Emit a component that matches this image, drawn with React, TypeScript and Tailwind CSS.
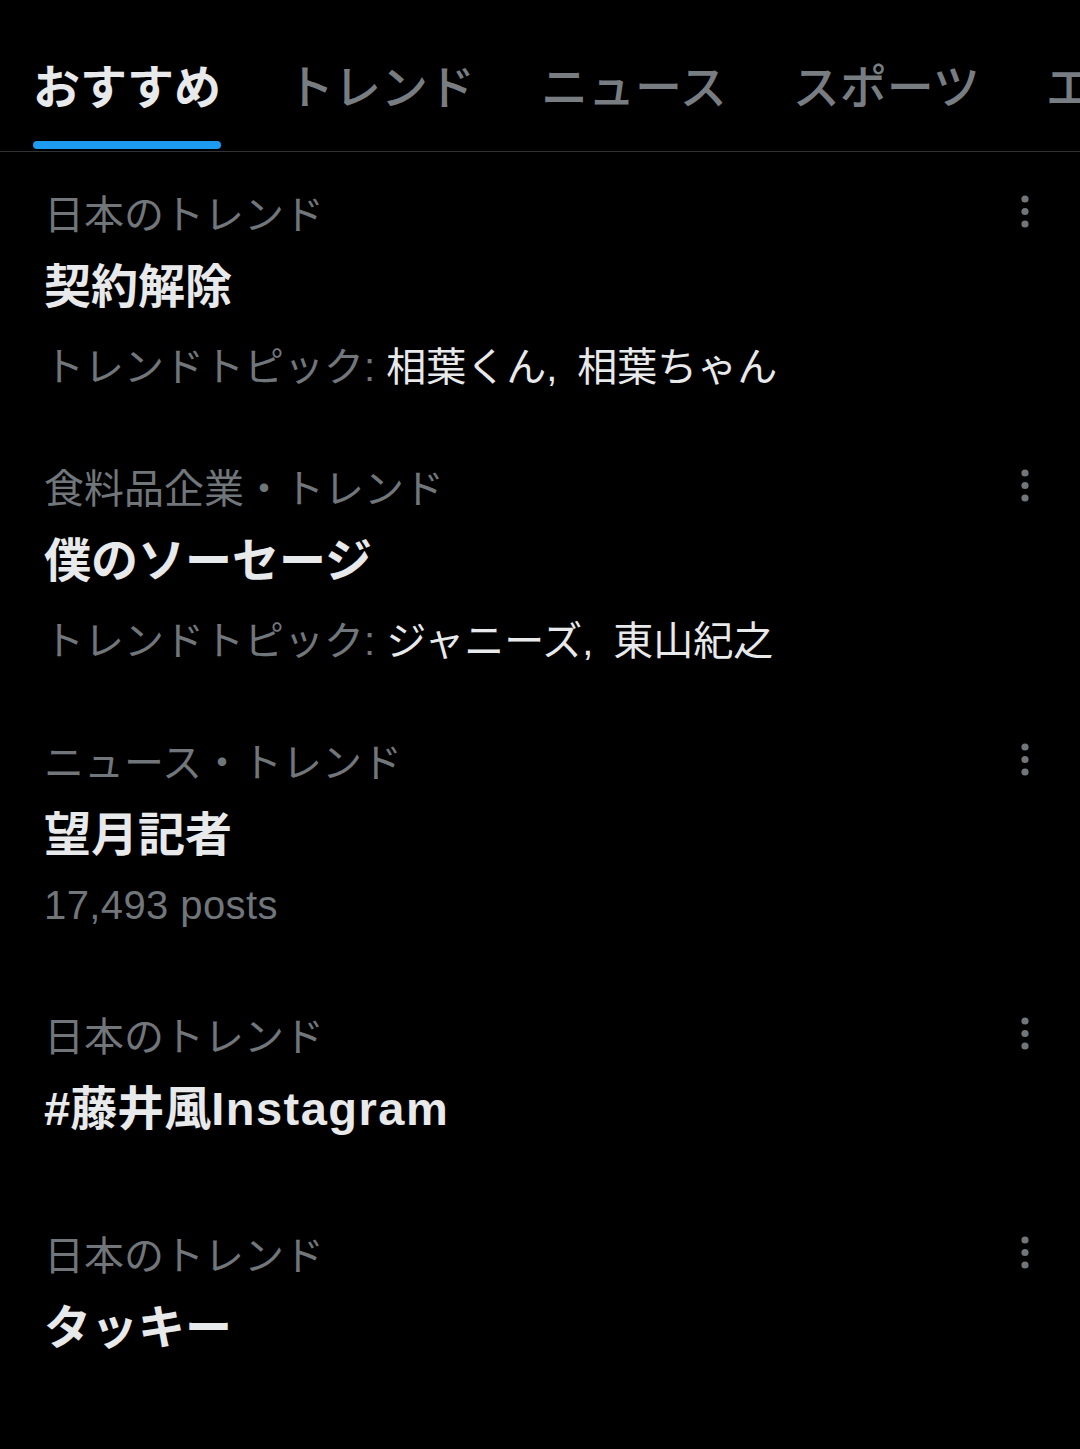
import React from 'react'

// --- Data ---

type Trend = {
  category: string
  title: string
  topics?: string
  posts?: string
}

const tabs = ['おすすめ', 'トレンド', 'ニュース', 'スポーツ', 'エンタメ'] as const

const trends: Trend[] = [
  { category: '日本のトレンド', title: '契約解除', topics: '相葉くん, 相葉ちゃん' },
  { category: '食料品企業・トレンド', title: '僕のソーセージ', topics: 'ジャニーズ, 東山紀之' },
  { category: 'ニュース・トレンド', title: '望月記者', posts: '17,493 posts' },
  { category: '日本のトレンド', title: '#藤井風Instagram' },
  { category: '日本のトレンド', title: 'タッキー' },
]

const FONT = "font-['Liberation_Sans','Noto_Sans_CJK_JP',sans-serif]"

// --- Sub-components ---

// latin runs in the title are a touch wider in the original font
function Title({ text }: { text: string }) {
  const parts = text.split(/([A-Za-z]+)/)
  return (
    <>
      {parts.map((p, i) =>
        /^[A-Za-z]+$/.test(p) ? (
          <span key={i} className="tracking-[1.5px]">
            {p}
          </span>
        ) : (
          <span key={i}>{p}</span>
        ),
      )}
    </>
  )
}

function MoreDots() {
  return (
    <svg width="8" height="33" viewBox="0 0 8 33" className="mt-[8px] mr-[51px] shrink-0" fill="#71767b">
      <circle cx="4" cy="4" r="3.6" />
      <circle cx="4" cy="16.5" r="3.6" />
      <circle cx="4" cy="29" r="3.6" />
    </svg>
  )
}

function TrendRow({ trend }: { trend: Trend }) {
  const hasSub = Boolean(trend.topics || trend.posts)
  return (
    <div className={`flex items-start pt-[35px] ${hasSub ? 'pb-[31px]' : 'pb-[52px]'}`}>
      <div className="min-w-0 flex-1 pl-[44px]">
        <div className="text-[40px] leading-[56px] text-[#71767b]">{trend.category}</div>
        <div className="mt-[12px] text-[47px] font-bold leading-[64px] text-[#e7e9ea]">
          <Title text={trend.title} />
        </div>
        {trend.topics && (
          <div className="mt-[20px] text-[40px] leading-[56px] text-[#71767b]">
            トレンドトピック: <span className="text-[#e7e9ea]">{trend.topics.replace(', ', ',\u2002')}</span>
          </div>
        )}
        {trend.posts && (
          <div className="mt-[10px] mb-[10px] text-[40px] leading-[56px] tracking-[0.4px] text-[#71767b]">
            {trend.posts}
          </div>
        )}
      </div>
      <MoreDots />
    </div>
  )
}

// --- Main component ---

export default function App() {
  return (
    <div className={`min-h-[1449px] w-[1080px] overflow-hidden bg-black ${FONT}`}>
      {/* Tab bar */}
      <div className="flex gap-[66px] overflow-hidden whitespace-nowrap border-b border-[#2f3336] pl-[33px]">
        {tabs.map((tab, i) => (
          <div key={tab} className="flex shrink-0 flex-col pt-[58px] pb-[2px]">
            <span
              className={`text-[47px] leading-[60px] ${
                i === 0 ? 'font-bold text-[#e7e9ea]' : 'font-medium text-[#787d82]'
              }`}
            >
              {tab}
            </span>
            <div className={`mt-[23px] h-[8px] rounded-full ${i === 0 ? 'bg-[#1d9bf0]' : 'bg-transparent'}`} />
          </div>
        ))}
      </div>

      {/* Trends */}
      <div>
        {trends.map((t, i) => (
          <TrendRow key={i} trend={t} />
        ))}
      </div>
    </div>
  )
}
